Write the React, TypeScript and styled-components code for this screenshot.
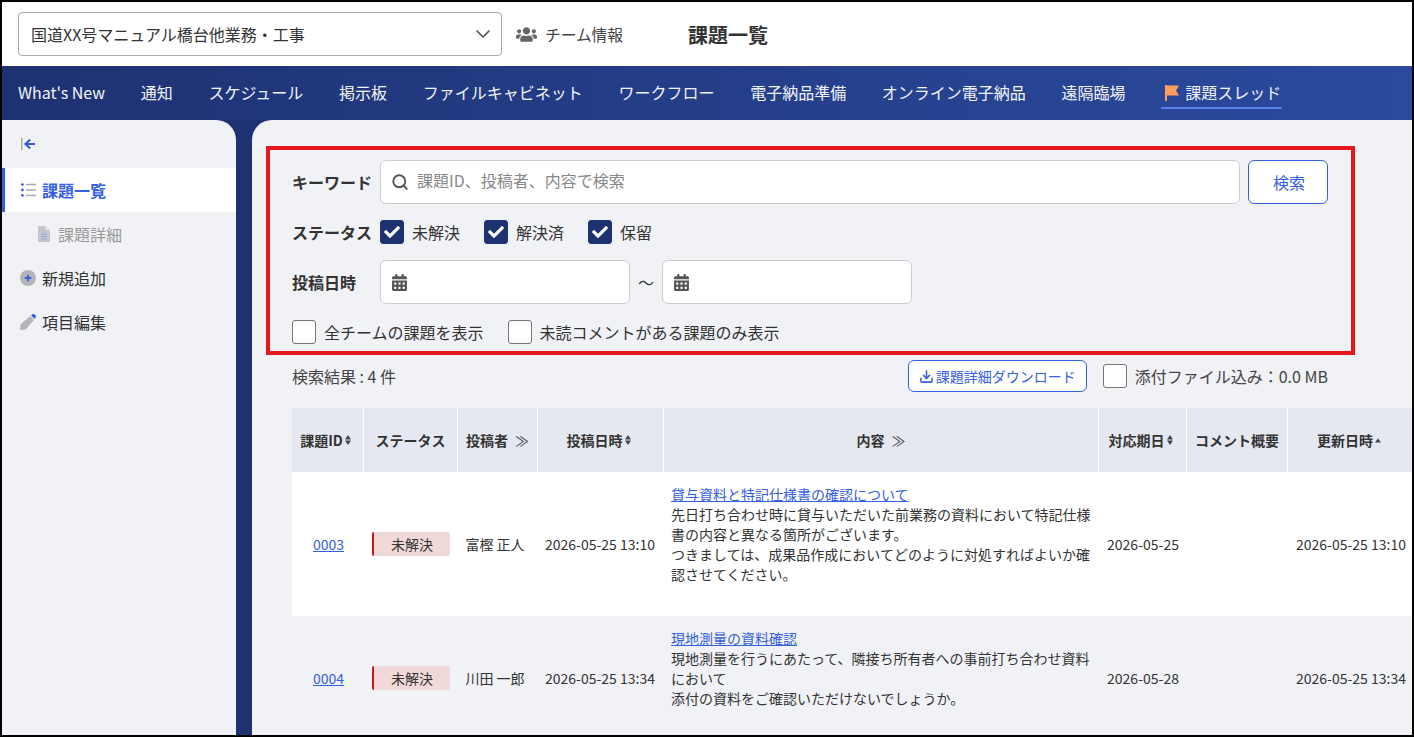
import React from 'react';
import styled, { createGlobalStyle } from 'styled-components';
import { ChevronDown, Search, Download } from 'lucide-react';
import { FaUsers, FaCalendarAlt, FaCheck } from 'react-icons/fa';

const GlobalStyle = createGlobalStyle`
  * { box-sizing: border-box; }
  html, body { margin: 0; padding: 0; background: #000; }
  body {
    font-family: "Noto Sans CJK JP", "Noto Sans", sans-serif;
    color: #333;
    font-size: 16px;
  }
`;

const Frame = styled.div`
  width: 1414px;
  height: 737px;
  border: 2px solid #000;
  display: flex;
  flex-direction: column;
  overflow: hidden;
  background: #fff;
`;

const Header = styled.header`
  height: 64px;
  flex: none;
  display: flex;
  align-items: center;
  padding-left: 16px;
  background: #fff;
`;

const ProjectSelect = styled.div`
  width: 484px;
  height: 44px;
  border: 1px solid #aaa;
  border-radius: 4px;
  display: flex;
  align-items: center;
  justify-content: space-between;
  padding: 0 6px 0 12px;
  font-size: 16px;
  color: #333;
  svg { color: #555; }
`;

const TeamInfo = styled.div`
  display: flex;
  align-items: center;
  gap: 8px;
  margin-left: 14px;
  font-size: 15.7px;
  color: #444;
  svg { color: #666; }
`;

const PageTitle = styled.h1`
  margin: 0 0 0 65px;
  font-size: 20px;
  font-weight: 700;
  color: #333;
`;

const Nav = styled.nav`
  height: 54px;
  flex: none;
  display: flex;
  align-items: center;
  gap: 35.7px;
  padding-left: 16px;
  background: linear-gradient(90deg, #1e3272 0%, #2b4a9f 100%);
`;

const NavItem = styled.a<{ $active?: boolean }>`
  display: flex;
  align-items: center;
  gap: 4px;
  height: 32px;
  color: #f2f4fa;
  font-size: 16px;
  font-weight: 400;
  white-space: nowrap;
  border-bottom: 2px solid ${(p) => (p.$active ? '#5b7fe8' : 'transparent')};
  padding: ${(p) => (p.$active ? '0 1px 0 4px' : '0')};
  svg { margin-top: 2px; }
`;

const Body = styled.div`
  flex: 1;
  min-height: 0;
  display: flex;
  gap: 16px;
  background: #1e3272;
`;

const Sidebar = styled.aside`
  width: 234px;
  flex: none;
  background: #f1f2f6;
  border-top-right-radius: 20px;
`;

const CollapseRow = styled.div`
  height: 48px;
  display: flex;
  align-items: center;
  padding-left: 18px;
`;

const SideItem = styled.div<{ $active?: boolean; $sub?: boolean }>`
  height: 44px;
  display: flex;
  align-items: center;
  gap: 6px;
  padding-left: ${(p) => (p.$sub ? '34px' : p.$active ? '15px' : '18px')};
  font-size: 16px;
  color: ${(p) => (p.$sub ? '#999' : p.$active ? '#3560e0' : '#333')};
  font-weight: ${(p) => (p.$active ? 700 : 400)};
  background: ${(p) => (p.$active ? '#fff' : 'transparent')};
  border-left: ${(p) => (p.$active ? '3px solid #2f5fe8' : 'none')};
`;

const Main = styled.main`
  flex: 1;
  min-width: 0;
  background: #f1f2f6;
  border-top-left-radius: 20px;
  padding: 26px 0 0 14px;
  overflow: hidden;
`;

const FilterPanel = styled.section`
  width: 1089px;
  height: 209px;
  border: 4px solid #e5161d;
  padding: 10px 23px 0 22px;
  display: flex;
  flex-direction: column;
  gap: 16px;
`;

const FilterRow = styled.div`
  display: flex;
  align-items: center;
`;

const FieldLabel = styled.label`
  width: 88px;
  flex: none;
  font-size: 16px;
  font-weight: 700;
  color: #333;
  white-space: nowrap;
`;

const SearchBox = styled.div`
  flex: 1;
  height: 44px;
  background: #fff;
  border: 1px solid #ccc;
  border-radius: 6px;
  display: flex;
  align-items: center;
  gap: 8px;
  padding-left: 10px;
  svg { color: #555; flex: none; }
`;

const SearchInput = styled.input`
  flex: 1;
  border: none;
  outline: none;
  background: transparent;
  font: inherit;
  font-size: 16px;
  color: #333;
  padding: 0 0 5px;
  &::placeholder { color: #888; opacity: 1; }
`;

const OutlineButton = styled.button<{ $small?: boolean }>`
  background: #fff;
  border: 1px solid #3560e0;
  border-radius: 6px;
  color: #3560e0;
  font-family: inherit;
  display: flex;
  align-items: center;
  justify-content: center;
  padding: 0 0 0 ${(p) => (p.$small ? '0' : '2px')};
  flex: none;
  width: ${(p) => (p.$small ? '179px' : '80px')};
  height: ${(p) => (p.$small ? '32px' : '44px')};
  margin-left: ${(p) => (p.$small ? 'auto' : '8px')};
  font-size: ${(p) => (p.$small ? '14px' : '16px')};
  gap: 2px;
`;

const CheckGroup = styled.div`
  display: flex;
  align-items: center;
  gap: 24px;
`;

const CheckLabel = styled.label`
  display: flex;
  align-items: center;
  gap: 8px;
  font-size: 16px;
  color: #333;
  white-space: nowrap;
`;

const CheckBox = styled.span<{ $checked?: boolean }>`
  width: 24px;
  height: 24px;
  flex: none;
  border-radius: 3px;
  display: flex;
  align-items: center;
  justify-content: center;
  color: #fff;
  background: ${(p) => (p.$checked ? '#1e3272' : '#fff')};
  border: 1px solid ${(p) => (p.$checked ? '#1e3272' : '#777')};
`;

const DateBox = styled.div`
  width: 250px;
  height: 44px;
  background: #fff;
  border: 1px solid #ccc;
  border-radius: 6px;
  display: flex;
  align-items: center;
  padding-left: 10px;
  svg { color: #555; }
`;

const Tilde = styled.span`
  width: 32px;
  text-align: center;
  font-size: 16px;
  color: #333;
`;

const ResultRow = styled.div`
  width: 1036px;
  height: 32px;
  margin: 5px 0 16px 26px;
  display: flex;
  align-items: center;
`;

const ResultCount = styled.span`
  font-size: 16px;
  color: #444;
`;

const AttachCheck = styled(CheckLabel)`
  margin-left: 16px;
  color: #444;
`;

const Table = styled.table`
  margin-left: 26px;
  width: 1122px;
  table-layout: fixed;
  border-collapse: separate;
  border-spacing: 0;
  font-size: 14px;
  line-height: 20px;
`;

const HeadCell = styled.th`
  height: 64px;
  padding: 0;
  background: #e5e8f1;
  border-right: 1px solid #fff;
  font-size: 14px;
  font-weight: 700;
  color: #333;
  text-align: center;
  white-space: nowrap;
  &:last-child { border-right: none; }
`;

const HeadInner = styled.span`
  display: inline-flex;
  align-items: center;
  justify-content: center;
  gap: 2px;
  padding-right: 4px;
`;

const ExpandMark = styled.span`
  margin-left: 7px;
  font-weight: 400;
`;

const Row = styled.tr<{ $alt?: boolean }>`
  background: ${(p) => (p.$alt ? '#f1f2f6' : '#fff')};
`;

const Cell = styled.td`
  padding: 0 7px;
  text-align: center;
  vertical-align: middle;
  color: #333;
  white-space: nowrap;
`;

const IdCell = styled(Cell)`
  padding: 0 6.5px 0 7.5px;
`;

const AuthorCell = styled(Cell)`
  padding: 0 10px 0 4px;
`;

const PostedCell = styled(Cell)`
  padding: 0 8px 0 6px;
`;

const ContentCell = styled(Cell)`
  padding: 12px 7px 32px;
  text-align: left;
  white-space: normal;
`;

const TableLink = styled.a`
  color: #3560e0;
  text-decoration: underline;
`;

const StatusBadge = styled.span`
  display: block;
  height: 24px;
  line-height: 24px;
  margin: 0 1px;
  background: #f2d9d9;
  border-left: 2px solid #c8161d;
  border-radius: 2px;
  text-align: center;
  color: #333;
`;

const FlagIcon = () => (
  <svg width="16" height="16" viewBox="0 0 16 16">
    <rect x="0" y="0" width="2" height="16" fill="#ff9d5c" />
    <path d="M2 0.5H14L11 5.5L14 10.5H2Z" fill="#ff9d5c" />
  </svg>
);

const CollapseIcon = () => (
  <svg width="16" height="16" viewBox="0 0 16 16">
    <rect x="1" y="2" width="1.5" height="12" fill="#aaa" />
    <path d="M15 8H6M10.2 3.5L5.5 8L10.2 12.5" stroke="#3560e0" strokeWidth="2.2" fill="none" />
  </svg>
);

const ListIcon = () => (
  <svg width="16" height="16" viewBox="0 0 16 16">
    <circle cx="2.4" cy="2.6" r="1.4" fill="#3560e0" />
    <circle cx="2.4" cy="8" r="1.4" fill="#3560e0" />
    <circle cx="2.4" cy="13.4" r="1.4" fill="#3560e0" />
    <path d="M6 2.6H16M6 8H16M6 13.4H16" stroke="#aaa" strokeWidth="1.5" />
  </svg>
);

const DocIcon = () => (
  <svg width="16" height="16" viewBox="0 0 16 16">
    <path d="M2 0H9.5L14 4.5V16H2Z" fill="#c4c6cc" />
    <path d="M9.5 0L14 4.5H9.5Z" fill="#dfe1e6" />
    <path d="M5 8H11M5 10.5H11M5 13H11" stroke="#8fa6e8" strokeWidth="1" />
  </svg>
);

const PlusIcon = () => (
  <svg width="16" height="16" viewBox="0 0 16 16">
    <circle cx="8" cy="8" r="8" fill="#b4b4b8" />
    <path d="M8 4.7V11.3M4.7 8H11.3" stroke="#3560e0" strokeWidth="1.8" />
  </svg>
);

const PencilIcon = () => (
  <svg width="16" height="16" viewBox="0 0 16 16">
    <path d="M0 16L0.6 10.5L10 2L14 6L5.5 15.4Z" fill="#b4b4b8" />
    <path d="M11 1.2L12.6 0.2C13.4 -0.2 14.2 0 14.8 0.6L15.6 1.5C16 2 16 2.8 15.6 3.4L14.6 5Z" fill="#2f5fe8" />
  </svg>
);

const SortIcon = ({ only }: { only?: boolean }) => (
  <svg width="6" height="10" viewBox="0 0 6 10">
    {only ? (
      <path d="M3 3.5L6 7.5H0Z" fill="#444" />
    ) : (
      <>
        <path d="M3 0L6 4.4H0Z" fill="#444" />
        <path d="M3 10L6 5.6H0Z" fill="#444" />
      </>
    )}
  </svg>
);

const navItems = [
  "What's New",
  '通知',
  'スケジュール',
  '掲示板',
  'ファイルキャビネット',
  'ワークフロー',
  '電子納品準備',
  'オンライン電子納品',
  '遠隔臨場',
];

const columns = [72, 94, 80, 126, 435, 88, 101, 126];

const issues = [
  {
    id: '0003',
    author: '富樫 正人',
    posted: '2026-05-25 13:10',
    title: '貸与資料と特記仕様書の確認について',
    body: [
      '先日打ち合わせ時に貸与いただいた前業務の資料において特記仕様書の内容と異なる箇所がございます。',
      'つきましては、成果品作成においてどのように対処すればよいか確認させてください。',
    ],
    due: '2026-05-25',
  },
  {
    id: '0004',
    author: '川田 一郎',
    posted: '2026-05-25 13:34',
    title: '現地測量の資料確認',
    body: [
      '現地測量を行うにあたって、隣接ち所有者への事前打ち合わせ資料において',
      '添付の資料をご確認いただけないでしょうか。',
    ],
    due: '2026-05-28',
  },
];

const App: React.FC = () => {
  return (
    <>
      <GlobalStyle />
      <Frame>
        <Header>
          <ProjectSelect>
            国道XX号マニュアル橋台他業務・工事
            <ChevronDown size={24} strokeWidth={1.75} />
          </ProjectSelect>
          <TeamInfo>
            <FaUsers size={21} />
            チーム情報
          </TeamInfo>
          <PageTitle>課題一覧</PageTitle>
        </Header>
        <Nav>
          {navItems.map((item) => (
            <NavItem key={item}>{item}</NavItem>
          ))}
          <NavItem $active>
            <FlagIcon />
            課題スレッド
          </NavItem>
        </Nav>
        <Body>
          <Sidebar>
            <CollapseRow>
              <CollapseIcon />
            </CollapseRow>
            <SideItem $active>
              <ListIcon />
              課題一覧
            </SideItem>
            <SideItem $sub>
              <DocIcon />
              課題詳細
            </SideItem>
            <SideItem>
              <PlusIcon />
              新規追加
            </SideItem>
            <SideItem>
              <PencilIcon />
              項目編集
            </SideItem>
          </Sidebar>
          <Main>
            <FilterPanel>
              <FilterRow>
                <FieldLabel>キーワード</FieldLabel>
                <SearchBox>
                  <Search size={18} strokeWidth={2.5} />
                  <SearchInput placeholder="課題ID、投稿者、内容で検索" />
                </SearchBox>
                <OutlineButton>検索</OutlineButton>
              </FilterRow>
              <FilterRow>
                <FieldLabel>ステータス</FieldLabel>
                <CheckGroup>
                  {['未解決', '解決済', '保留'].map((s) => (
                    <CheckLabel key={s}>
                      <CheckBox $checked>
                        <FaCheck size={16} />
                      </CheckBox>
                      {s}
                    </CheckLabel>
                  ))}
                </CheckGroup>
              </FilterRow>
              <FilterRow>
                <FieldLabel>投稿日時</FieldLabel>
                <DateBox>
                  <FaCalendarAlt size={17} />
                </DateBox>
                <Tilde>～</Tilde>
                <DateBox>
                  <FaCalendarAlt size={17} />
                </DateBox>
              </FilterRow>
              <CheckGroup>
                <CheckLabel>
                  <CheckBox />
                  全チームの課題を表示
                </CheckLabel>
                <CheckLabel>
                  <CheckBox />
                  未読コメントがある課題のみ表示
                </CheckLabel>
              </CheckGroup>
            </FilterPanel>
            <ResultRow>
              <ResultCount>検索結果 : 4 件</ResultCount>
              <OutlineButton $small>
                <Download size={15} strokeWidth={2.5} />
                課題詳細ダウンロード
              </OutlineButton>
              <AttachCheck>
                <CheckBox />
                添付ファイル込み：0.0 MB
              </AttachCheck>
            </ResultRow>
            <Table>
              <colgroup>
                {columns.map((w, i) => (
                  <col key={i} style={{ width: w }} />
                ))}
              </colgroup>
              <thead>
                <tr>
                  <HeadCell><HeadInner>課題ID<SortIcon /></HeadInner></HeadCell>
                  <HeadCell>ステータス</HeadCell>
                  <HeadCell>投稿者<ExpandMark>≫</ExpandMark></HeadCell>
                  <HeadCell><HeadInner>投稿日時<SortIcon /></HeadInner></HeadCell>
                  <HeadCell>内容<ExpandMark>≫</ExpandMark></HeadCell>
                  <HeadCell><HeadInner>対応期日<SortIcon /></HeadInner></HeadCell>
                  <HeadCell>コメント概要</HeadCell>
                  <HeadCell><HeadInner>更新日時<SortIcon only /></HeadInner></HeadCell>
                </tr>
              </thead>
              <tbody>
                {issues.map((issue, i) => (
                  <Row key={issue.id} $alt={i % 2 === 1}>
                    <IdCell><TableLink>{issue.id}</TableLink></IdCell>
                    <Cell><StatusBadge>未解決</StatusBadge></Cell>
                    <AuthorCell>{issue.author}</AuthorCell>
                    <PostedCell>{issue.posted}</PostedCell>
                    <ContentCell>
                      <TableLink>{issue.title}</TableLink>
                      {issue.body.map((line) => (
                        <div key={line}>{line}</div>
                      ))}
                    </ContentCell>
                    <Cell>{issue.due}</Cell>
                    <Cell />
                    <Cell>{issue.posted}</Cell>
                  </Row>
                ))}
              </tbody>
            </Table>
          </Main>
        </Body>
      </Frame>
    </>
  );
};

export default App;
